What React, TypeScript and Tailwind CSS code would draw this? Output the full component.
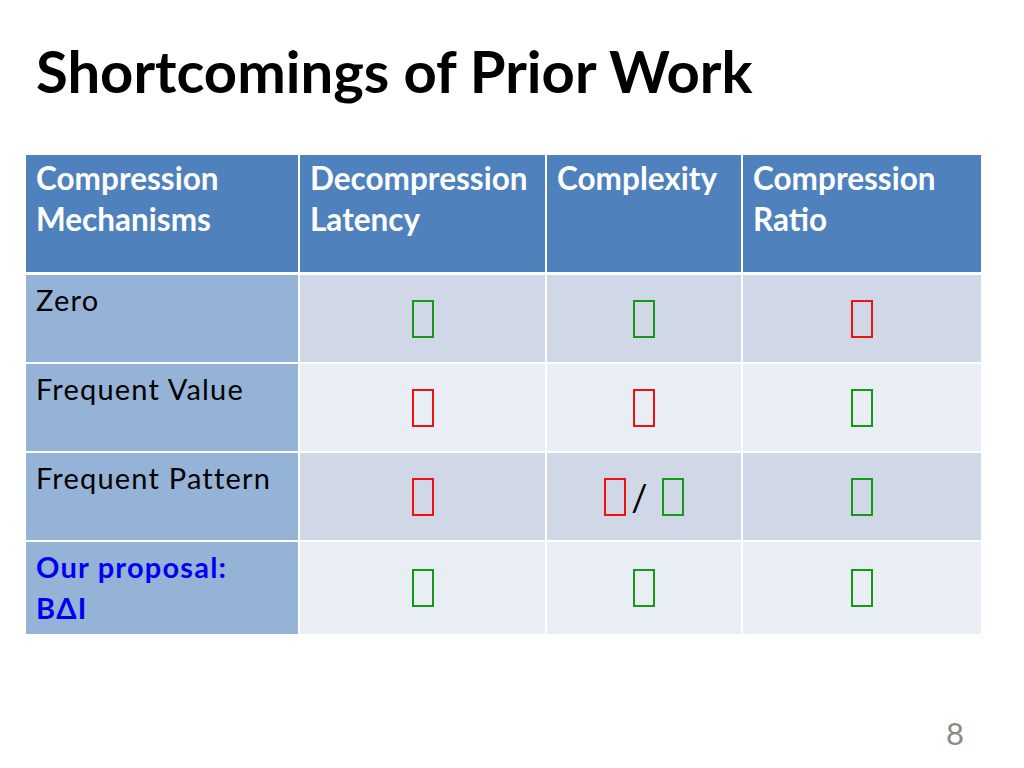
import React from "react";

const Box = ({ c }: { c: "g" | "r" }) => (
  <span
    className={
      "inline-block w-[22px] h-[38px] border-[2.5px] " +
      (c === "g" ? "border-[#139a13]" : "border-[#f01010]")
    }
  />
);

type Cell = React.ReactNode;

const rows: { name: React.ReactNode; cells: Cell[]; alt: boolean; h: string }[] = [
  { name: "Zero", cells: [<Box c="g" />, <Box c="g" />, <Box c="r" />], alt: false, h: "h-[87px]" },
  { name: "Frequent Value", cells: [<Box c="r" />, <Box c="r" />, <Box c="g" />], alt: true, h: "h-[87px]" },
  {
    name: "Frequent Pattern",
    cells: [
      <Box c="r" />,
      <span className="flex items-center">
        <Box c="r" />
        <span className="ml-[5px] mr-[14px] text-[36px] leading-none text-black">/</span>
        <Box c="g" />
      </span>,
      <Box c="g" />,
    ],
    alt: false,
    h: "h-[87px]",
  },
  {
    name: (
      <span className="font-bold text-[#0000f0]">
        Our proposal:
        <br />
        BΔI
      </span>
    ),
    cells: [<Box c="g" />, <Box c="g" />, <Box c="g" />],
    alt: true,
    h: "h-[92px]",
  },
];

export default function App() {
  return (
    <div
      className="w-[1024px] h-[768px] bg-white relative overflow-hidden"
      style={{ fontFamily: "Lato, 'Open Sans', sans-serif" }}
    >
      <h1 className="absolute left-[36px] top-[42px] text-[58px] font-bold leading-none text-black">
        Shortcomings of Prior Work
      </h1>
      <div className="absolute left-[26px] top-[155px] w-[955px] flex flex-col gap-[2px]">
        <div className="grid grid-cols-[272px_245px_194px_238px] gap-x-[2px] h-[117px] mb-[1px]">
          {[
            ["Compression", "Mechanisms"],
            ["Decompression", "Latency"],
            ["Complexity"],
            ["Compression", "Ratio"],
          ].map((t, i) => (
            <div
              key={i}
              className="bg-[#4f81bd] text-white font-bold text-[31.5px] leading-[41px] px-[10px] pt-[3px] whitespace-nowrap"
            >
              {t.map((l, j) => (
                <div key={j}>{l}</div>
              ))}
            </div>
          ))}
        </div>
        {rows.map((r, i) => (
          <div
            key={i}
            className={"grid grid-cols-[272px_245px_194px_238px] gap-x-[2px] " + r.h}
          >
            <div className="bg-[#95b3d7] text-black text-[29px] tracking-[1.2px] leading-[41px] px-[10px] pt-[4px] whitespace-nowrap">
              {r.name}
            </div>
            {r.cells.map((c, j) => (
              <div
                key={j}
                className={
                  "flex items-center justify-center " +
                  (r.alt ? "bg-[#e9edf4]" : "bg-[#d0d8e8]")
                }
              >
                {c}
              </div>
            ))}
          </div>
        ))}
      </div>
      <div className="absolute left-[946px] top-[718px] text-[31px] leading-none text-[#8a8a8a]">
        8
      </div>
    </div>
  );
}
